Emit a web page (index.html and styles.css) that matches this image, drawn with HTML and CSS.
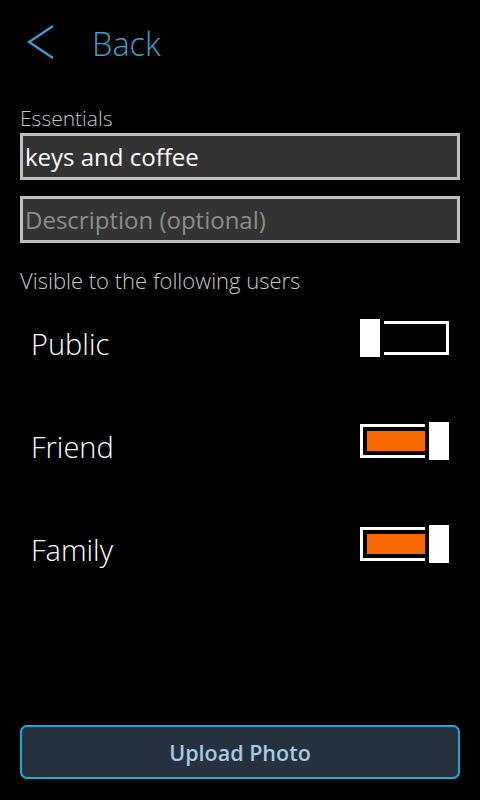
FILE: index.html
```html
<!DOCTYPE html>
<html>
<head>
    <title>New Item</title>
    <link rel="stylesheet" href="styles.css">
</head>
<body>
    <div class="page">
        <div class="header">
            <svg class="back-icon" width="28" height="34" viewBox="0 0 28 34">
                <polyline points="26,1 2,17 26,33" fill="none" stroke="#3d9fd0" stroke-width="2.2"/>
            </svg>
            <span class="back-text">Back</span>
        </div>

        <div class="form">
            <div class="label">Essentials</div>
            <div class="field">keys and coffee</div>
            <div class="field placeholder">Description (optional)</div>

            <div class="label visible">Visible to the following users</div>

            <div class="options">
                <div class="option">
                    <span class="option-name">Public</span>
                    <div class="switch off">
                        <div class="track"><div class="fill"></div></div>
                        <div class="knob"></div>
                    </div>
                </div>
                <div class="option">
                    <span class="option-name">Friend</span>
                    <div class="switch on">
                        <div class="track"><div class="fill"></div></div>
                        <div class="knob"></div>
                    </div>
                </div>
                <div class="option">
                    <span class="option-name">Family</span>
                    <div class="switch on">
                        <div class="track"><div class="fill"></div></div>
                        <div class="knob"></div>
                    </div>
                </div>
            </div>
        </div>

        <button class="upload">Upload Photo</button>
    </div>
</body>
</html>
```

FILE: styles.css
```css
body {
    margin: 0;
    padding: 0;
    background: #000;
    font-family: "Open Sans", "Noto Sans", sans-serif;
    color: #fff;
}

.page {
    height: 800px;
    display: flex;
    flex-direction: column;
    padding: 0 20px;
    box-sizing: border-box;
}

.header {
    display: flex;
    align-items: center;
    height: 86px;
    padding-left: 7px;
}

.back-icon {
    margin-top: -2px;
}

.back-text {
    margin-left: 37px;
    font-size: 32.5px;
    font-weight: 300;
    color: #3d9fd0;
}

.form {
    flex: 1;
}

.label {
    font-size: 21px;
    font-weight: 300;
    color: #c8c8c8;
    line-height: 24px;
    margin-top: 20px;
    margin-bottom: 3px;
}

.field {
    height: 41px;
    border: 3px solid #bfbfbf;
    background: #333;
    font-size: 24px;
    line-height: 41px;
    padding-left: 2px;
    color: #fff;
    margin-bottom: 16px;
}

.field.placeholder {
    color: #8c8c8c;
}

.visible {
    font-size: 22px;
    margin-top: 25px;
    margin-bottom: 0;
}

.options {
    margin-top: -6px;
}

.option {
    display: flex;
    justify-content: space-between;
    align-items: center;
    height: 103px;
    padding-left: 11px;
}

.option-name {
    font-size: 29px;
    font-weight: 300;
    margin-top: 12px;
}

.switch {
    position: relative;
    width: 89px;
    height: 38px;
    margin-right: 11px;
}

.track {
    position: absolute;
    left: 0;
    right: 0;
    top: 2px;
    bottom: 2px;
    border: 3px solid #fff;
    padding: 4px;
}

.fill {
    height: 100%;
}

.on .fill {
    background: #fa6800;
}

.knob {
    position: absolute;
    top: 0;
    width: 20px;
    height: 38px;
    background: #fff;
}

.on .knob {
    right: 0;
    border-left: 4px solid #000;
}

.off .knob {
    left: 0;
    border-right: 4px solid #000;
}

.upload {
    height: 54px;
    margin-bottom: 21px;
    border: 2px solid #1ba8dc;
    border-radius: 7px;
    background: #25313d;
    color: #a9c9dd;
    font-family: "Open Sans", "Noto Sans", sans-serif;
    font-size: 21.5px;
    font-weight: 600;
}
```
